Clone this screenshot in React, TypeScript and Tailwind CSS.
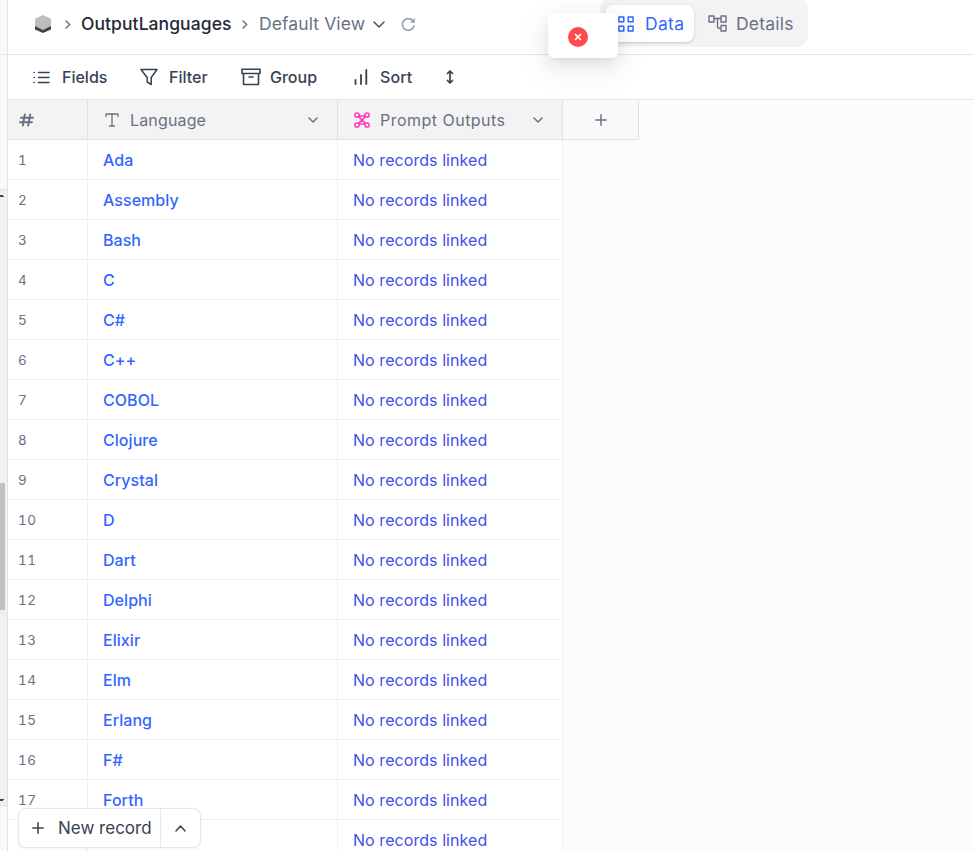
import React from "react";

const languages = [
  "Ada", "Assembly", "Bash", "C", "C#", "C++", "COBOL", "Clojure", "Crystal",
  "D", "Dart", "Delphi", "Elixir", "Elm", "Erlang", "F#", "Forth", "",
];

type IconProps = { className?: string; children: React.ReactNode; w: number; h: number; sw?: number };

function Icon({ className = "", children, w, h, sw = 1.5 }: IconProps) {
  return (
    <svg
      className={`shrink-0 ${className}`}
      width={w}
      height={h}
      viewBox={`0 0 ${w} ${h}`}
      fill="none"
      stroke="currentColor"
      strokeWidth={sw}
      strokeLinecap="round"
      strokeLinejoin="round"
    >
      {children}
    </svg>
  );
}

function Chevron({ className = "", w = 10, h = 6 }: { className?: string; w?: number; h?: number }) {
  return (
    <Icon className={className} w={w} h={h}>
      <path d={`M1 1 L${w / 2} ${h - 1} L${w - 1} 1`} />
    </Icon>
  );
}

function Crumb({ className = "" }: { className?: string }) {
  return (
    <Icon className={className} w={6} h={9}>
      <path d="M1 1 L4.7 4.5 L1 8" />
    </Icon>
  );
}

function TopBar() {
  return (
    <header className="flex h-[55px] shrink-0 items-start border-b border-[#e7e7e9] pl-[27px]">
      <div className="flex h-12 items-center whitespace-nowrap">
        <svg width="16" height="18" viewBox="0 0 16 18">
          <path d="M0 9 H16 V14.5 L8 18 L0 14.5 Z" fill="#434343" />
          <path d="M0 3.8 L8 0 L16 3.8 V11 L8 15 L0 11 Z" fill="#bdbdbd" />
        </svg>
        <Crumb className="ml-[14px] text-[#6a7184]" />
        <span className="ml-[10px] w-[152px] text-[17.5px] font-medium tracking-[0.07px] text-[#1f293a]">OutputLanguages</span>
        <Crumb className="ml-[9px] text-[#6a7184]" />
        <span className="ml-[11px] w-[106px] text-[17.5px] tracking-[0.1px] text-[#6a7184]">Default View</span>
        <Chevron className="ml-[8px] text-[#4a5268]" w={12} h={7} />
        <Icon className="ml-[16px] text-[#9aa2b1]" w={15} h={15} sw={1.7}>
          <path d="M13 9 A5.9 5.9 0 1 1 11.6 3.4 L13 4.8" />
          <path d="M13.6 1.6 V5.4 H9.8 Z" fill="currentColor" strokeWidth="0.5" />
        </Icon>
      </div>
      <div className="ml-[184px] flex h-[47px] w-[208px] items-start rounded-b-xl rounded-t-lg bg-[#f3f3f4] pl-[5px] pt-[5px]">
        <div className="flex h-[37px] w-[89px] items-center rounded-lg bg-white pl-[13px] text-[#3366ff] shadow-[0_1px_3px_rgba(0,0,0,0.18)]">
          <Icon w={16} h={16}>
            <path d="M.9 .9H5.8V5.8H.9Z M10.2 .9H15.1V5.8H10.2Z M.9 10.2H5.8V15.1H.9Z M10.2 10.2H15.1V15.1H10.2Z" />
          </Icon>
          <span className="ml-[11px] pt-px text-[17.5px] tracking-[0.3px]">Data</span>
        </div>
        <div className="flex h-[37px] items-center pl-[14px] text-[#6a7184]">
          <Icon w={19} h={17} sw={1.4}>
            <path d="M1 1H6V7H1Z M13 1H18V7H13Z M13 10.5H18V16H13Z M6 3.5H13 M9.5 3.5V11Q9.5 13.2 11 13.2H13" />
          </Icon>
          <span className="ml-[9px] pt-px text-[17.5px] tracking-[0.2px]">Details</span>
        </div>
      </div>
    </header>
  );
}

function Toolbar() {
  return (
    <div className="flex h-[45px] shrink-0 items-center border-b border-[#e7e7e9] pl-[25px] text-[16px] font-medium text-[#374151]">
      <Icon w={17} h={13}>
        <path d="M5.5 1.5H16 M5.5 6.5H16 M5.5 11.5H16 M1 1.5H1.2 M1 6.5H1.2 M1 11.5H1.2" />
      </Icon>
      <span className="ml-[12px] w-[46px]">Fields</span>
      <Icon className="ml-[32px]" w={18} h={18}>
        <path d="M1 1.5H17L11.2 9.5V16.5L7.2 14V9.5Z" />
      </Icon>
      <span className="ml-[11px] w-[40px]">Filter</span>
      <Icon className="ml-[32px]" w={20} h={18} sw={1.6}>
        <path d="M1 1.2H19V5.5H1Z M2.5 5.5V16.5H17.5V5.5 M8 9H12" />
      </Icon>
      <span className="ml-[9px] w-[48px]">Group</span>
      <Icon className="ml-[36px]" w={14} h={16} sw={1.8}>
        <path d="M1.5 11V15 M7 6V15 M12.3 1V15" />
      </Icon>
      <span className="ml-[12px] w-[34px] tracking-[0.1px]">Sort</span>
      <Icon className="ml-[32px]" w={8} h={14} sw={1.7}>
        <path d="M4 1V13 M1.5 3.5L4 1L6.5 3.5 M1.5 10.5L4 13L6.5 10.5" />
      </Icon>
    </div>
  );
}

function GridHeader() {
  return (
    <div className="flex h-10 shrink-0 text-[16px] text-[#6a7184]">
      <div className="flex w-[80px] items-center border-b border-r border-[#e2e2e4] bg-[#f3f3f4] pl-[11px]">
        <Icon w={15} h={14} sw={1.9}>
          <path d="M5.8 1.5L3.8 12.5 M11.2 1.5L9.2 12.5 M2 4.8H14 M1 9.2H13" />
        </Icon>
      </div>
      <div className="flex w-[250px] items-center border-b border-r border-[#e2e2e4] bg-[#f3f3f4] pl-[17px]">
        <Icon w={14} h={14} sw={1.3}>
          <path d="M1 3.5V1H13V3.5 M7 1V13 M4.5 13H9.5" />
        </Icon>
        <span className="ml-[11px] w-[77px] tracking-[0.15px]">Language</span>
        <Chevron className="ml-[101px]" />
      </div>
      <div className="flex w-[225px] items-center border-b border-r border-[#e2e2e4] bg-[#f3f3f4] pl-[16px]">
        <Icon className="text-[#fc3ac6]" w={16} h={16}>
          <circle cx="3" cy="3" r="2.1" />
          <circle cx="13" cy="3" r="2.1" />
          <circle cx="3" cy="13" r="2.1" />
          <circle cx="13" cy="13" r="2.1" />
          <path d="M5 4H11 M5 12H11 M4.6 4.6L11.4 11.4 M11.4 4.6L4.6 11.4" />
        </Icon>
        <span className="ml-[10px] w-[127px] whitespace-nowrap tracking-[0.48px]">Prompt Outputs</span>
        <Chevron className="ml-[26px]" />
      </div>
      <div className="flex w-[76px] items-center justify-center border-b border-r border-[#e2e2e4] bg-[#f9f9fa]">
        <Icon w={12} h={12}><path d="M6 .8V11.2 M.8 6H11.2" /></Icon>
      </div>
    </div>
  );
}

function Row({ name, index }: { name: string; index: number }) {
  return (
    <div className="flex h-10 shrink-0 bg-white">
      <div className="flex w-[80px] items-center border-b border-r border-[#f1f1f3] pl-[10px] pt-px text-[13.5px] tabular-nums tracking-[0.6px] text-[#6a7184]">
        {name ? index : ""}
      </div>
      <div className="flex w-[250px] items-center border-b border-r border-[#f1f1f3] pl-[15px] text-[16px] font-medium tracking-[0.05px] text-[#3366ff]">
        {name}
      </div>
      <div className="flex w-[225px] items-center border-b border-r border-[#f1f1f3] pl-[15px] text-[16px] tracking-[0.06px] text-[#4351e8]">
        No records linked
      </div>
    </div>
  );
}

function SideScroll() {
  return (
    <aside className="flex w-[8px] shrink-0 flex-col border-r border-[#e2e2e4] bg-[#f9f9fa]">
      <div className="h-[55px] border-b border-[#e7e7e9]" />
      <div className="h-[134px]" />
      <div className="flex h-[617px] flex-col border-y border-[#e2e2e4] bg-[#f0f0f0]">
        <div className="mt-[5px] h-px w-[3px] bg-[#444]" />
        <div className="h-px w-[4px] bg-[#444]" />
        <div className="mt-[286px] h-[127px] w-[5px] bg-[#c1c1c1]" />
        <div className="mt-[189px] h-px w-[4px] bg-[#444]" />
        <div className="h-px w-[3px] bg-[#444]" />
      </div>
    </aside>
  );
}

export default function App() {
  return (
    <div className="relative flex h-[851px] w-[974px] overflow-hidden bg-white font-['Inter','Liberation_Sans',sans-serif]">
      <SideScroll />
      <main className="flex min-w-0 flex-1 flex-col">
        <TopBar />
        <Toolbar />
        <div className="flex min-h-0 flex-1 flex-col overflow-hidden bg-[#fcfcfc]">
          <GridHeader />
          <div className="flex w-[555px] flex-col">
            {languages.map((name, i) => <Row key={i} name={name} index={i + 1} />)}
          </div>
        </div>
      </main>

      <div className="absolute left-[548px] top-[13px] flex h-[45px] w-[70px] items-center rounded-md bg-white pb-px pl-[20px] pt-[3px] shadow-[0_6px_16px_rgba(0,0,0,0.08),0_9px_28px_8px_rgba(0,0,0,0.05),0_3px_6px_-4px_rgba(0,0,0,0.12)]">
        <svg width="20" height="20" viewBox="0 0 20 20">
          <circle cx="10" cy="10" r="10" fill="#ff4a4d" />
          <path d="M7 7L13 13M13 7L7 13" stroke="white" strokeWidth="1.7" />
        </svg>
      </div>

      <div className="absolute left-[18px] top-[808px] flex h-10 w-[183px] rounded-lg border border-[#e7e7e9] bg-white text-[#374151] shadow-[0_1px_3px_rgba(0,0,0,0.06)]">
        <div className="flex w-[142px] items-center border-r border-[#e7e7e9] pl-[13px]">
          <Icon w={12} h={12}><path d="M6 .8V11.2 M.8 6H11.2" /></Icon>
          <span className="ml-[14px] whitespace-nowrap pt-px text-[17px]">New record</span>
        </div>
        <div className="flex flex-1 items-center justify-center">
          <Chevron className="rotate-180" w={11} h={7} />
        </div>
      </div>
    </div>
  );
}
